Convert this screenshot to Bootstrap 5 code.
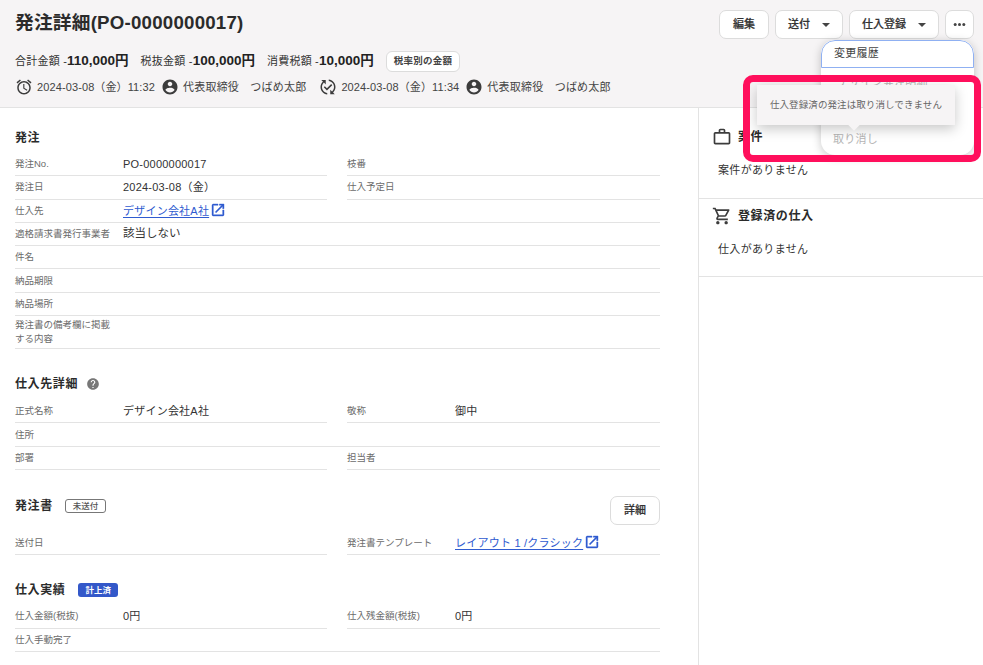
<!DOCTYPE html>
<html lang="ja">
<head>
  <meta charset="UTF-8">
  <title>発注詳細</title>
  <meta name="viewport" content="width=device-width, initial-scale=1">
  <link rel="stylesheet" href="https://cdn.jsdelivr.net/npm/bootstrap@5.3.3/dist/css/bootstrap.min.css">
  <style>
    html, body {
      height: 100%;
      overflow: hidden;
    }
    body {
      font-family: "Liberation Sans", "Noto Sans CJK JP", sans-serif;
      font-size: 11px;
      color: #333;
      letter-spacing: .02em;
    }
    .page-head {
      height: 108px;
      background: #f6f4f5;
      border-bottom: 1px solid #e3e3e3;
      padding: 10px 9px 0 15px;
    }
    .page-title {
      font-size: 18.7px;
      font-weight: 700;
      margin: 2px 0 0;
      color: #2b2b2b;
    }
    .head-actions { gap: 6px; }
    .head-btn {
      height: 29px;
      padding: 0 13px;
      font-size: 11px;
      font-weight: 500;
      color: #333;
      background: #fff;
      border: 1px solid #dcdcdc;
      border-radius: 7px;
      display: inline-flex;
      align-items: center;
      -webkit-text-stroke: .2px #333;
    }
    .head-btn.more-btn { padding: 0 7px; }
    .head-btn.caret-btn { padding: 0 12px; }
    .caret-mark {
      width: 0;
      height: 0;
      margin-left: 12px;
      border-left: 4px solid transparent;
      border-right: 4px solid transparent;
      border-top: 4px solid #444;
    }
    .sum-line { margin-top: 13px; height: 19px; }
    .sum-line b { font-size: 13.5px; color: #222; letter-spacing: 0; }
    .sum-item { margin-right: 12px; }
    .rate-chip {
      background: #fff;
      border: 1px solid #dcdcdc;
      border-radius: 6px;
      font-size: 9.5px;
      font-weight: 700;
      padding: 2px 7px;
      color: #444;
    }
    .meta-line { margin-top: 6px; height: 20px; color: #444; }
    .meta-line svg { fill: #3c3c3c; flex: none; }
    .meta-date { letter-spacing: .01em; margin: 0 6px 0 4px; }
    .meta-name { margin: 0 13px 0 4px; }
    .body-wrap { height: 557px; }
    .main-pane {
      width: 699px;
      flex: none;
      border-right: 1px solid #e3e3e3;
      padding: 0 38px 0 15px;
    }
    .side-pane { flex: 1; }
    .sec-first { padding-top: 21px; }
    .sec-gap { margin-top: 26px; }
    .sec-title {
      font-size: 12px;
      font-weight: 700;
      color: #2b2b2b;
      margin: 0 0 6px;
      height: 18px;
      letter-spacing: .05em;
      display: flex;
      align-items: center;
    }
    .sec-title.roomy { margin-bottom: 7px; }
    .sec-title.beside-btn { margin: 1px 0 0; }
    .under-btn { margin-top: 7px; }
    .info-row {
      display: grid;
      grid-template-columns: 312px 313px;
      column-gap: 20px;
    }
    .info-cell {
      display: flex;
      align-items: center;
      height: 23.3px;
      border-bottom: 1px solid #e3e3e3;
    }
    .info-row.joined { column-gap: 0; grid-template-columns: 332px 313px; }
    .info-cell.tall { height: 33px; }
    .lbl {
      width: 108px;
      flex: none;
      padding-right: 8px;
      font-size: 9.5px;
      line-height: 14px;
      color: #6b6b6b;
      letter-spacing: 0;
    }
    .val { color: #333; }
    .val-big { font-size: 11.5px; letter-spacing: 0; }
    .ext-link { color: #2f5bd0; text-decoration: underline; text-underline-offset: 2px; }
    .ext-link svg { fill: #2f5bd0; stroke: #2f5bd0; stroke-width: .6; vertical-align: -3px; margin-left: 1px; }
    .state-chip {
      font-size: 8.5px;
      font-weight: 500;
      border: 1px solid #777;
      border-radius: 3px;
      padding: 0 7px;
      line-height: 12px;
      color: #555;
      margin-left: 12px;
      letter-spacing: 0;
    }
    .done-chip {
      font-size: 8.5px;
      font-weight: 700;
      background: #3358c9;
      color: #fff;
      border-radius: 3px;
      padding: 0 7px;
      line-height: 14px;
      margin-left: 13px;
      letter-spacing: 0;
    }
    .side-block {
      height: 78px;
      padding: 7px 0 0 13px;
      border-bottom: 1px solid #e3e3e3;
    }
    .side-block:first-child { height: 91px; padding-top: 19px; }
    .side-title { font-size: 12px; font-weight: 700; color: #2b2b2b; letter-spacing: .05em; margin: 0; gap: 6px; }
    .side-title svg { fill: #3c3c3c; }
    .side-empty { margin: 15px 0 0 6px; font-size: 11px; letter-spacing: .03em; }
    .overflow-menu {
      position: absolute;
      left: 821px;
      top: 40px;
      width: 153px;
      height: 115px;
      background: #fff;
      border-radius: 14px;
      box-shadow: 0 2px 10px rgba(0,0,0,.22);
      color: #b5b5b5;
      overflow: hidden;
    }
    .menu-line { height: 29px; padding: 0 12px; display: flex; align-items: center; }
    .menu-line.shifted { padding-left: 17px; }
    .menu-line.hidden-line { height: 28px; }
    .menu-line.focus-line {
      height: 28px;
      padding-bottom: 2px;
      color: #444;
      border: 1px solid #8fb0f2;
      border-top-left-radius: 14px;
      border-top-right-radius: 14px;
    }
    .tip-box {
      position: absolute;
      left: 757px;
      top: 85px;
      width: 198px;
      height: 40px;
      background: #f6f4f5;
      box-shadow: 0 4px 12px rgba(0,0,0,.22);
      display: flex;
      align-items: center;
      justify-content: center;
      font-size: 9.5px;
      color: #666;
      letter-spacing: .01em;
    }
    .tip-box::after {
      content: "";
      position: absolute;
      left: 93px;
      bottom: -4px;
      width: 8px;
      height: 8px;
      background: #f6f4f5;
      transform: rotate(45deg);
    }
    .pink-frame {
      position: absolute;
      left: 743px;
      top: 75px;
      width: 238px;
      height: 87px;
      border: 7px solid #ff0f5c;
      border-radius: 10px;
      pointer-events: none;
    }
  </style>
</head>
<body class="position-relative">

<header class="page-head">
  <div class="d-flex justify-content-between align-items-start">
    <h1 class="page-title">発注詳細(PO-0000000017)</h1>
    <div class="d-flex head-actions">
      <button class="head-btn" type="button">編集</button>
      <button class="head-btn caret-btn" type="button">送付<span class="caret-mark"></span></button>
      <button class="head-btn caret-btn" type="button">仕入登録<span class="caret-mark"></span></button>
      <button class="head-btn more-btn" type="button" aria-label="その他">
        <svg width="13" height="13" viewBox="0 0 13 13" fill="#444"><circle cx="2.2" cy="6.5" r="1.5"/><circle cx="6.5" cy="6.5" r="1.5"/><circle cx="10.8" cy="6.5" r="1.5"/></svg>
      </button>
    </div>
  </div>
  <div class="sum-line d-flex align-items-center">
    <span class="sum-item">合計金額 -<b>110,000円</b></span>
    <span class="sum-item">税抜金額 -<b>100,000円</b></span>
    <span class="sum-item">消費税額 -<b>10,000円</b></span>
    <span class="rate-chip">税率別の金額</span>
  </div>
  <div class="meta-line d-flex align-items-center">
    <svg width="18" height="18" viewBox="0 0 24 24"><path d="M22 5.72l-4.6-3.86-1.29 1.53 4.6 3.86L22 5.72zM7.88 3.39L6.6 1.86 2 5.71l1.29 1.53 4.59-3.85zM12.5 8H11v6l4.75 2.85.75-1.23-4-2.37V8zM12 4c-4.97 0-9 4.03-9 9s4.02 9 9 9c4.97 0 9-4.03 9-9s-4.03-9-9-9zm0 16c-3.87 0-7-3.13-7-7s3.13-7 7-7 7 3.13 7 7-3.13 7-7 7z"/></svg>
    <span class="meta-date">2024-03-08（金）11:32</span>
    <svg width="18" height="18" viewBox="0 0 24 24"><path d="M12 2C6.48 2 2 6.48 2 12s4.48 10 10 10 10-4.48 10-10S17.52 2 12 2zm0 3c1.66 0 3 1.34 3 3s-1.34 3-3 3-3-1.34-3-3 1.34-3 3-3zm0 14.2c-2.5 0-4.71-1.28-6-3.22.03-1.99 4-3.08 6-3.08 1.99 0 5.97 1.09 6 3.08-1.29 1.94-3.5 3.22-6 3.22z"/></svg>
    <span class="meta-name">代表取締役　つばめ太郎</span>
    <svg width="18" height="18" viewBox="0 0 24 24"><path d="M17.66 9.53l-7.07 7.07-4.24-4.24 1.41-1.41 2.83 2.83 5.66-5.66 1.41 1.41zM4 12c0-2.33 1.02-4.42 2.62-5.88L9 8.5v-6H3l2.2 2.2C3.24 6.52 2 9.11 2 12c0 5.19 3.95 9.45 9 9.95v-2.02c-3.94-.49-7-3.86-7-7.93zm18 0c0-5.19-3.95-9.45-9-9.95v2.02c3.94.49 7 3.86 7 7.93 0 2.33-1.02 4.42-2.62 5.88L15 15.5v6h6l-2.2-2.2c1.96-1.82 3.2-4.41 3.2-7.3z"/></svg>
    <span class="meta-date">2024-03-08（金）11:34</span>
    <svg width="18" height="18" viewBox="0 0 24 24"><path d="M12 2C6.48 2 2 6.48 2 12s4.48 10 10 10 10-4.48 10-10S17.52 2 12 2zm0 3c1.66 0 3 1.34 3 3s-1.34 3-3 3-3-1.34-3-3 1.34-3 3-3zm0 14.2c-2.5 0-4.71-1.28-6-3.22.03-1.99 4-3.08 6-3.08 1.99 0 5.97 1.09 6 3.08-1.29 1.94-3.5 3.22-6 3.22z"/></svg>
    <span class="meta-name">代表取締役　つばめ太郎</span>
  </div>
</header>

<div class="body-wrap d-flex">
  <main class="main-pane">
    <section class="sec-first">
      <h2 class="sec-title">発注</h2>
      <div class="info-row">
        <div class="info-cell"><span class="lbl">発注No.</span><span class="val">PO-0000000017</span></div>
        <div class="info-cell"><span class="lbl">枝番</span></div>
      </div>
      <div class="info-row">
        <div class="info-cell"><span class="lbl">発注日</span><span class="val">2024-03-08（金）</span></div>
        <div class="info-cell"><span class="lbl">仕入予定日</span></div>
      </div>
      <div class="info-row joined">
        <div class="info-cell"><span class="lbl">仕入先</span><a class="ext-link" href="#">デザイン会社A社<svg width="16" height="16" viewBox="0 0 24 24"><path d="M19 19H5V5h7V3H5c-1.11 0-2 .9-2 2v14c0 1.1.89 2 2 2h14c1.1 0 2-.9 2-2v-7h-2v7zM14 3v2h3.59l-9.83 9.83 1.41 1.41L19 6.41V10h2V3h-7z"/></svg></a></div>
        <div class="info-cell"></div>
      </div>
      <div class="info-cell"><span class="lbl">適格請求書発行事業者</span><span class="val val-big">該当しない</span></div>
      <div class="info-cell"><span class="lbl">件名</span></div>
      <div class="info-cell"><span class="lbl">納品期限</span></div>
      <div class="info-cell"><span class="lbl">納品場所</span></div>
      <div class="info-cell tall"><span class="lbl">発注書の備考欄に掲載する内容</span></div>
    </section>

    <section class="sec-gap">
      <h2 class="sec-title roomy">仕入先詳細
        <svg class="ms-2" width="14" height="14" viewBox="0 0 24 24" fill="#777"><path d="M12 2C6.48 2 2 6.48 2 12s4.48 10 10 10 10-4.48 10-10S17.52 2 12 2zm1 17h-2v-2h2v2zm2.07-7.75l-.9.92C13.45 12.9 13 13.5 13 15h-2v-.5c0-1.1.45-2.1 1.17-2.83l1.24-1.26c.37-.36.59-.86.59-1.41 0-1.1-.9-2-2-2s-2 .9-2 2H8c0-2.21 1.79-4 4-4s4 1.79 4 4c0 .88-.36 1.68-.93 2.25z"/></svg>
      </h2>
      <div class="info-row">
        <div class="info-cell"><span class="lbl">正式名称</span><span class="val">デザイン会社A社</span></div>
        <div class="info-cell"><span class="lbl">敬称</span><span class="val">御中</span></div>
      </div>
      <div class="info-cell"><span class="lbl">住所</span></div>
      <div class="info-row">
        <div class="info-cell"><span class="lbl">部署</span></div>
        <div class="info-cell"><span class="lbl">担当者</span></div>
      </div>
    </section>

    <section class="sec-gap">
      <div class="d-flex justify-content-between align-items-start">
        <h2 class="sec-title beside-btn">発注書<span class="state-chip">未送付</span></h2>
        <button class="head-btn" type="button">詳細</button>
      </div>
      <div class="info-row under-btn">
        <div class="info-cell"><span class="lbl">送付日</span></div>
        <div class="info-cell"><span class="lbl">発注書テンプレート</span><a class="ext-link" href="#">レイアウト 1 /クラシック<svg width="16" height="16" viewBox="0 0 24 24"><path d="M19 19H5V5h7V3H5c-1.11 0-2 .9-2 2v14c0 1.1.89 2 2 2h14c1.1 0 2-.9 2-2v-7h-2v7zM14 3v2h3.59l-9.83 9.83 1.41 1.41L19 6.41V10h2V3h-7z"/></svg></a></div>
      </div>
    </section>

    <section class="sec-gap">
      <h2 class="sec-title">仕入実績<span class="done-chip">計上済</span></h2>
      <div class="info-row">
        <div class="info-cell"><span class="lbl">仕入金額(税抜)</span><span class="val">0円</span></div>
        <div class="info-cell"><span class="lbl">仕入残金額(税抜)</span><span class="val">0円</span></div>
      </div>
      <div class="info-cell"><span class="lbl">仕入手動完了</span></div>
    </section>
  </main>

  <aside class="side-pane">
    <div class="side-block">
      <h2 class="side-title d-flex align-items-center">
        <svg width="20" height="20" viewBox="0 0 24 24"><path d="M14 6V4h-4v2h4zM4 8v11h16V8H4zm16-2c1.11 0 2 .89 2 2v11c0 1.11-.89 2-2 2H4c-1.11 0-2-.89-2-2l.01-11c0-1.11.88-2 1.99-2h4V4c0-1.11.89-2 2-2h4c1.11 0 2 .89 2 2v2h4z"/></svg>
        案件
      </h2>
      <p class="side-empty">案件がありません</p>
    </div>
    <div class="side-block">
      <h2 class="side-title d-flex align-items-center">
        <svg width="20" height="20" viewBox="0 0 24 24"><path d="M15.55 13c.75 0 1.41-.41 1.75-1.03l3.58-6.49c.37-.66-.11-1.48-.87-1.48H5.21l-.94-2H1v2h2l3.6 7.59-1.35 2.44C4.52 15.37 5.48 17 7 17h12v-2H7l1.1-2h7.45zM6.16 6h12.15l-2.76 5H8.53L6.16 6zM7 18c-1.1 0-1.99.9-1.99 2S5.9 22 7 22s2-.9 2-2-.9-2-2-2zm10 0c-1.1 0-1.99.9-1.99 2s.89 2 1.99 2 2-.9 2-2-.9-2-2-2z"/></svg>
        登録済の仕入
      </h2>
      <p class="side-empty">仕入がありません</p>
    </div>
  </aside>
</div>

<div class="overflow-menu">
  <div class="menu-line focus-line">変更履歴</div>
  <div class="menu-line shifted">デザイン発注明細</div>
  <div class="menu-line hidden-line"></div>
  <div class="menu-line">取り消し</div>
</div>
<div class="tip-box">仕入登録済の発注は取り消しできません</div>
<div class="pink-frame"></div>

<script src="https://cdn.jsdelivr.net/npm/bootstrap@5.3.3/dist/js/bootstrap.bundle.min.js"></script>
</body>
</html>
